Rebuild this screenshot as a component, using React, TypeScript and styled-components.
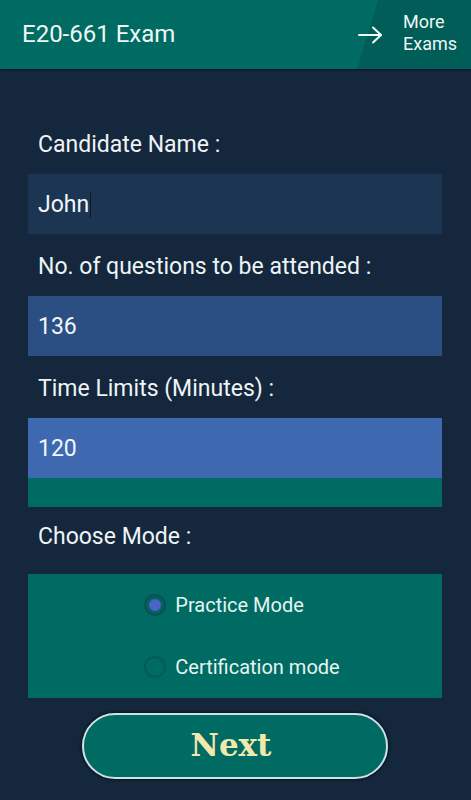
import { useState } from "react";
import styled, { createGlobalStyle } from "styled-components";

const GlobalStyle = createGlobalStyle`
  html, body {
    margin: 0;
    padding: 0;
    background-color: #14273d;
  }
  body {
    font-family: Roboto, "Noto Sans", "Liberation Sans", sans-serif;
    color: #eef4f6;
  }
`;

const Screen = styled.div`
  display: flex;
  flex-direction: column;
  width: 471px;
  height: 800px;
  overflow: hidden;
  background-color: #14273d;
`;

const Header = styled.header`
  display: flex;
  align-items: stretch;
  height: 69px;
  background-color: #006b63;
  box-shadow: 0 1px 2px rgba(0, 0, 0, 0.5);
`;

const Title = styled.h1`
  flex: 1;
  margin: 0;
  padding-left: 22px;
  display: flex;
  align-items: center;
  font-size: 24px;
  font-weight: 400;
  color: #eef7f5;
  padding-bottom: 2px;
`;

// slanted darker tab on the right of the toolbar
const MoreExams = styled.a`
  display: flex;
  align-items: center;
  gap: 20px;
  width: 114px;
  box-sizing: border-box;
  background:
    linear-gradient(#005d57, #005d57) 21px 0 / 100% 100% no-repeat,
    linear-gradient(to top left, #005d57 50%, transparent 50%) 0 0 / 21px 100% no-repeat;
  color: #eef7f5;
  text-decoration: none;
  cursor: pointer;
`;

const MoreText = styled.span`
  font-size: 18px;
  line-height: 22px;
  padding-bottom: 3px;
  white-space: nowrap;
`;

const Form = styled.main`
  display: flex;
  flex-direction: column;
  padding: 0 29px 0 28px;
`;

const Label = styled.div<{ $top: number; $bottom: number }>`
  margin-top: ${(p) => p.$top}px;
  margin-bottom: ${(p) => p.$bottom}px;
  padding-left: 10px;
  height: 30px;
  line-height: 30px;
  font-size: 23px;
  white-space: nowrap;
  color: #eef4f6;
`;

const Field = styled.div<{ $bg: string }>`
  display: flex;
  align-items: center;
  height: 60px;
  padding-left: 10px;
  background-color: ${(p) => p.$bg};
  font-size: 23px;
  color: #f2f6fa;
`;

const Caret = styled.span`
  display: inline-block;
  width: 1px;
  height: 27px;
  margin-left: 1px;
  background-color: #0d1a2a;
`;

const Band = styled.div`
  height: 29px;
  background-color: #006b63;
`;

const ModePanel = styled.div`
  display: flex;
  justify-content: center;
  height: 124px;
  background-color: #006b63;
`;

const RadioGroup = styled.div`
  display: flex;
  flex-direction: column;
  padding-left: 14px;
`;

const Option = styled.label`
  display: flex;
  align-items: center;
  gap: 9px;
  height: 62px;
  font-size: 20px;
  color: #e6f4f2;
  cursor: pointer;
`;

const Dot = styled.span<{ $on: boolean }>`
  position: relative;
  width: 22px;
  height: 22px;
  border-radius: 50%;
  box-sizing: border-box;
  border: 2px solid rgba(20, 50, 70, 0.3);
  background-color: ${(p) => (p.$on ? "rgba(20, 50, 70, 0.15)" : "transparent")};

  &::after {
    content: "";
    position: absolute;
    left: 3px;
    top: 3px;
    width: 12px;
    height: 12px;
    border-radius: 50%;
    background-color: #4a63c4;
    display: ${(p) => (p.$on ? "block" : "none")};
  }
`;

const NextButton = styled.button`
  align-self: center;
  margin-top: 15px;
  width: 306px;
  height: 66px;
  border-radius: 33px;
  border: 2px solid #cfe2ea;
  background-color: #006b63;
  box-shadow: 0 0 3px 1px rgba(0, 0, 0, 0.5);
  color: #f3e8ac;
  font-family: "DejaVu Serif", "Liberation Serif", serif;
  font-weight: 700;
  font-size: 31px;
  padding: 0 8px 3px 0;
  cursor: pointer;
`;

const ArrowIcon = () => (
  <svg width="26" height="20" viewBox="0 0 26 20" fill="none" stroke="#f2f8f6" strokeWidth="2" strokeLinecap="round" strokeLinejoin="round">
    <path d="M2 10 H24" />
    <path d="M16 2.5 L24 10 L16 17.5" />
  </svg>
);

const modes = ["Practice Mode", "Certification mode"];

const App = () => {
  const [mode, setMode] = useState(modes[0]);

  return (
    <Screen>
      <GlobalStyle />
      <Header>
        <Title>E20-661 Exam</Title>
        <MoreExams>
          <ArrowIcon />
          <MoreText>
            More
            <br />
            Exams
          </MoreText>
        </MoreExams>
      </Header>

      <Form>
        <Label $top={61} $bottom={14}>Candidate Name :</Label>
        <Field $bg="#1c3552">
          John
          <Caret />
        </Field>

        <Label $top={18} $bottom={14}>No. of questions to be attended :</Label>
        <Field $bg="#2b4f82">136</Field>

        <Label $top={18} $bottom={14}>Time Limits (Minutes) :</Label>
        <Field $bg="#3e69b1">120</Field>
        <Band />

        <Label $top={15} $bottom={22}>Choose Mode :</Label>
        <ModePanel>
          <RadioGroup>
            {modes.map((m) => (
              <Option key={m} onClick={() => setMode(m)}>
                <Dot $on={mode === m} />
                {m}
              </Option>
            ))}
          </RadioGroup>
        </ModePanel>

        <NextButton>Next</NextButton>
      </Form>
    </Screen>
  );
};

export default App;
